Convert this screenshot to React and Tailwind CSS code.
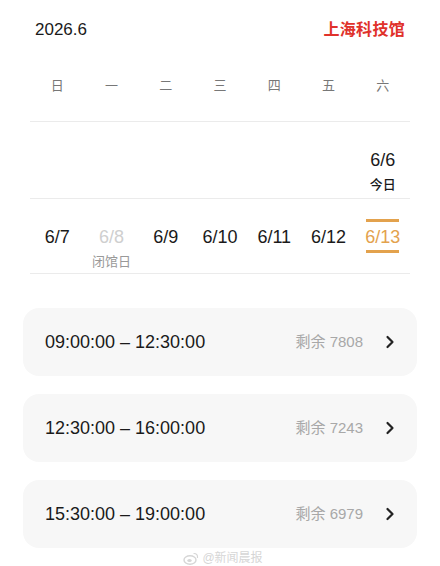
import React from 'react';

const weekdays = ['日', '一', '二', '三', '四', '五', '六'];

const week2 = [
  { d: '6/7' },
  { d: '6/8', closed: true },
  { d: '6/9' },
  { d: '6/10' },
  { d: '6/11' },
  { d: '6/12' },
  { d: '6/13', selected: true },
];

const slots = [
  { time: '09:00:00 – 12:30:00', left: 7808 },
  { time: '12:30:00 – 16:00:00', left: 7243 },
  { time: '15:30:00 – 19:00:00', left: 6979 },
];

function Chevron() {
  return (
    <svg width="10" height="14" viewBox="0 0 10 14" fill="none">
      <path d="M2.5 2 L7.5 7 L2.5 12" stroke="#222" strokeWidth="2.2" strokeLinecap="round" strokeLinejoin="round" />
    </svg>
  );
}

export default function App() {
  return (
    <div
      className="w-[440px] h-[566px] bg-white text-[#1a1a1a] overflow-hidden"
      style={{ fontFamily: '"Liberation Sans", "Noto Sans CJK SC", sans-serif' }}
    >
      <header className="flex justify-between items-center px-[35px] pt-[18px] h-[42px]">
        <span className="text-[17px] leading-[24px]">2026.6</span>
        <span className="text-[16px] leading-[24px] font-semibold text-[#e0322b] tracking-[0.3px]">上海科技馆</span>
      </header>

      <section className="mx-[30px]">
        <div className="grid grid-cols-7 pt-[34px] pb-[25px] border-b border-[#ebebeb]">
          {weekdays.map(w => (
            <div key={w} className="text-center text-[13px] leading-[20px] text-[#777]">{w}</div>
          ))}
        </div>

        <div className="grid grid-cols-7 pt-[26px] pb-[4px] border-b border-[#ebebeb]">
          {[0, 1, 2, 3, 4, 5].map(i => <div key={i} />)}
          <div className="flex flex-col items-center gap-[4px]">
            <span className="text-[18px] leading-[24px] font-medium">6/6</span>
            <span className="text-[13px] leading-[18px] font-medium">今日</span>
          </div>
        </div>

        <div className="grid grid-cols-7 pt-[20px] pb-[2px] border-b border-[#ebebeb]">
          {week2.map(day => (
            <div key={day.d} className="flex flex-col items-center">
              <div className={`w-[33px] h-[3px] ${day.selected ? 'bg-[#e3a24d]' : ''}`} />
              <span
                className={`mt-[3px] text-[18px] leading-[24px] font-medium ${
                  day.selected ? 'text-[#e3a24d]' : day.closed ? 'text-[#cfcfcf]' : 'text-[#1a1a1a]'
                }`}
              >
                {day.d}
              </span>
              <div className={`mt-[1px] w-[33px] h-[3px] ${day.selected ? 'bg-[#e3a24d]' : ''}`} />
              <span className="h-[18px] text-[13px] leading-[18px] text-[#999]">{day.closed ? '闭馆日' : ''}</span>
            </div>
          ))}
        </div>
      </section>

      <main className="mx-[23px] mt-[34px] flex flex-col gap-[18px]">
        {slots.map(s => (
          <div key={s.time} className="h-[68px] rounded-[16px] bg-[#f7f7f7] flex items-center justify-between pl-[22px] pr-[22px]">
            <span className="text-[18px]">{s.time}</span>
            <div className="flex items-center gap-[22px]">
              <span className="text-[15px] text-[#a8a8a8]">剩余 {s.left}</span>
              <Chevron />
            </div>
          </div>
        ))}
      </main>

      <div className="flex justify-center items-center gap-[3px] mt-[1px] text-[12px] text-[#d6d6d6] pl-[6px]">
        <svg width="16" height="13" viewBox="0 0 16 13" fill="none">
          <ellipse cx="7" cy="8" rx="6" ry="4.2" stroke="#d6d6d6" strokeWidth="1.4" />
          <ellipse cx="6.5" cy="8.5" rx="2.2" ry="1.6" fill="#d6d6d6" />
          <path d="M11 1.5 C13.5 1.5 14.8 3 14.5 5.5" stroke="#d6d6d6" strokeWidth="1.2" strokeLinecap="round" />
        </svg>
        <span>@新闻晨报</span>
      </div>
    </div>
  );
}
